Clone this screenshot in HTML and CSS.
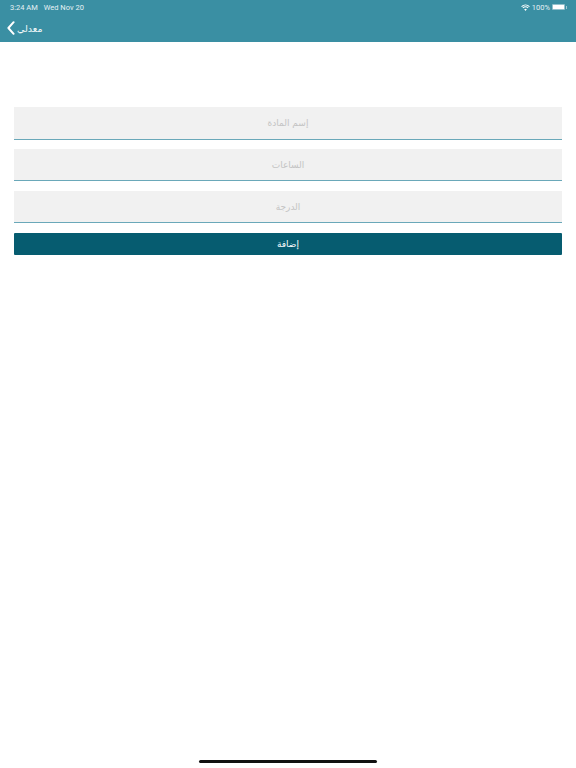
FILE: index.html

```html
<!DOCTYPE html>
<html lang="ar">
<head>
    <meta charset="UTF-8">
    <meta name="viewport" content="width=device-width, initial-scale=1.0">
    <title>معدلي</title>
    <link rel="stylesheet" href="styles.css">
</head>
<body>
    <header class="top-bar">
        <div class="status-bar">
            <div class="status-left">
                <span>3:24 AM</span>
                <span>Wed Nov 20</span>
            </div>
            <div class="status-right">
                <svg class="wifi" width="9" height="7" viewBox="0 0 16 12">
                    <path d="M8 12 L5.6 9.2 A3.6 3.6 0 0 1 10.4 9.2 Z" fill="#fff"/>
                    <path d="M3.3 6.8 A7 7 0 0 1 12.7 6.8" fill="none" stroke="#fff" stroke-width="1.9"/>
                    <path d="M1 4.3 A10.4 10.4 0 0 1 15 4.3" fill="none" stroke="#fff" stroke-width="1.9"/>
                </svg>
                <span>100%</span>
                <div class="battery"><div class="battery-fill"></div></div>
                <div class="battery-tip"></div>
            </div>
        </div>
        <div class="nav-bar">
            <a href="#" class="back-link">
                <svg width="8" height="14" viewBox="0 0 8 14">
                    <path d="M6.6 1.2 L1.4 7 L6.6 12.8" fill="none" stroke="#fff" stroke-width="2" stroke-linecap="round" stroke-linejoin="round"/>
                </svg>
                <span dir="rtl">معدلي</span>
            </a>
        </div>
    </header>

    <form class="grade-form">
        <input type="text" class="field" placeholder="إسم المادة" dir="rtl">
        <input type="text" class="field" placeholder="الساعات" dir="rtl">
        <input type="text" class="field" placeholder="الدرجة" dir="rtl">
        <button type="submit" class="btn">إضافة</button>
    </form>

    <div class="home-indicator"></div>
</body>
</html>
```

FILE: styles.css

```css
* {
    margin: 0;
    padding: 0;
    box-sizing: border-box;
}

html, body {
    height: 100%;
}

body {
    font-family: "DejaVu Sans", sans-serif;
    background: white;
    display: flex;
    flex-direction: column;
    overflow: hidden;
}

.top-bar {
    background: #3a8fa3;
    height: 42px;
    color: white;
}

.status-bar {
    height: 14px;
    padding: 0 9px 0 10px;
    display: flex;
    align-items: center;
    justify-content: space-between;
    font-family: Roboto, sans-serif;
    font-size: 7.5px;
    color: #e6f1f4;
}

.status-left {
    display: flex;
    gap: 6px;
}

.status-right {
    display: flex;
    align-items: center;
    gap: 2px;
}

.battery {
    width: 13px;
    height: 6px;
    padding: 1px;
    border-radius: 1px;
    background: rgba(255, 255, 255, 0.45);
}

.battery-fill {
    height: 100%;
    background: white;
}

.battery-tip {
    width: 1px;
    height: 3px;
    margin-left: -1px;
    background: rgba(255, 255, 255, 0.5);
}

.nav-bar {
    height: 28px;
    padding-left: 7px;
    display: flex;
    align-items: center;
}

.back-link {
    display: flex;
    align-items: center;
    gap: 2px;
    color: #f2f8fa;
    text-decoration: none;
    font-size: 9.5px;
}

.grade-form {
    flex: 1;
    padding: 65px 14px 0;
    display: flex;
    flex-direction: column;
}

.field {
    width: 100%;
    height: 32px;
    margin-bottom: 10px;
    background: #f1f1f1;
    border: none;
    border-bottom: 1px solid #6aa8b9;
    border-radius: 0;
    outline: none;
    text-align: center;
    font-family: inherit;
    font-size: 9px;
}

.field:first-child {
    height: 33px;
    margin-bottom: 9px;
}

.field::placeholder {
    color: #c4c4c4;
}

.btn {
    width: 100%;
    height: 22px;
    background: #065c70;
    color: white;
    border: none;
    border-radius: 1px;
    font-family: inherit;
    font-size: 9px;
}

.home-indicator {
    width: 178px;
    height: 3px;
    margin: 0 auto 5px;
    background: #111;
    border-radius: 2px;
}
```
